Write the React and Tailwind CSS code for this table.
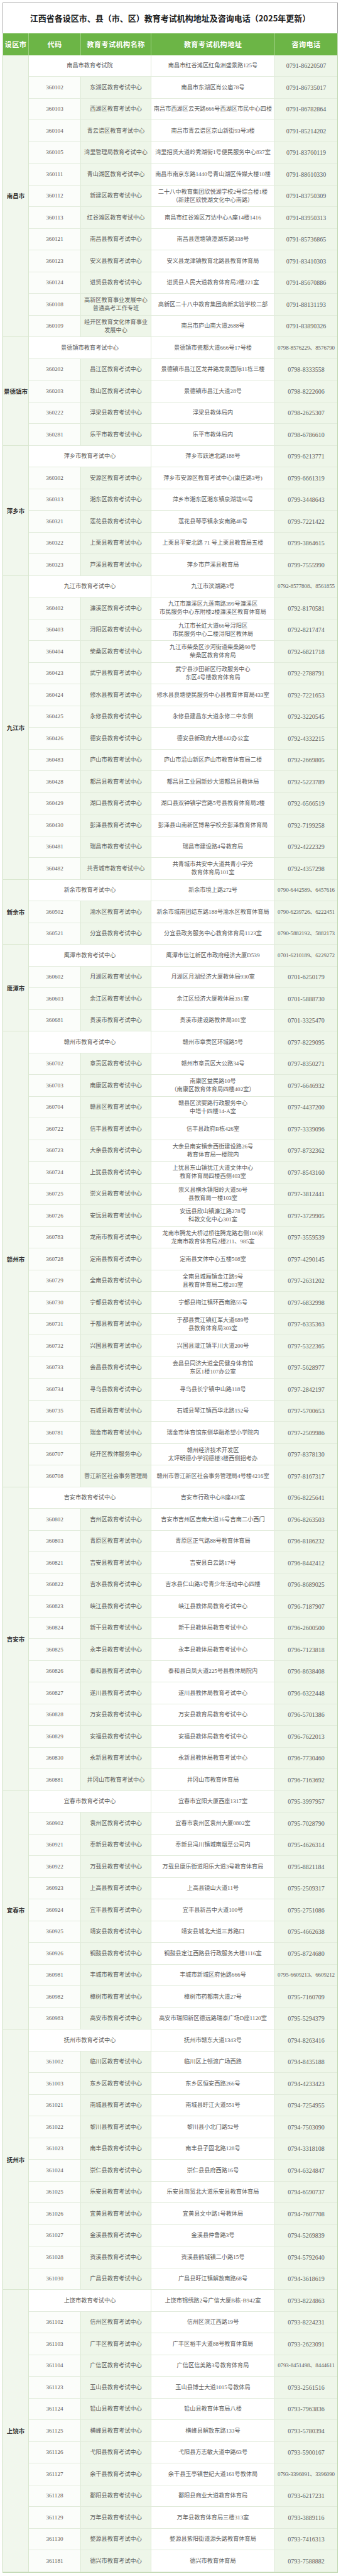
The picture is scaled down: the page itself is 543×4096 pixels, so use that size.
import React from 'react';

// 江西省各设区市、县（市、区）教育考试机构地址及咨询电话
// first row of each city has no code: the city-level center spans 代码 + 名称
const groups = [
  {
    city: '南昌市',
    rows: [
      [null, '南昌市教育考试院', '南昌市红谷滩区红角洲盛景路125号', '0791-86220507'],
      ['360102', '东湖区教育考试中心', '南昌市东湖区肖公庙78号', '0791-86735017'],
      ['360103', '西湖区教育考试中心', '南昌市西湖区云天路666号西湖区市民中心四楼', '0791-86782864'],
      ['360104', '青云谱区教育考试中心', '南昌市青云谱区京山新街93号3楼', '0791-85214202'],
      ['360105', '湾里管理局教育考试中心', '湾里招贤大道岭秀湖街1号便民服务中心837室', '0791-83760119'],
      ['360111', '青山湖区教育考试中心', '南昌市南京东路1440号青山湖区传媒大楼10楼', '0791-88610330'],
      ['360112', '新建区教育考试中心', '二十八中教育集团欣悦湖学校2号综合楼1楼\n（新建区欣悦湖文化中心南路）', '0791-83750309'],
      ['360113', '红谷滩区教育考试中心', '南昌市红谷滩区万达中心A座14楼1416', '0791-83950313'],
      ['360121', '南昌县教育考试中心', '南昌县莲塘镇澄湖东路338号', '0791-85736865'],
      ['360123', '安义县教育考试中心', '安义县龙津镇教育北路县教育体育局', '0791-83410303'],
      ['360124', '进贤县教育考试中心', '进贤县人民大道教育体育局2楼221室', '0791-85670886'],
      ['360108', '高新区教育事业发展中心\n普通高考工作专班', '高新区二十八中教育集团高新实验学校二部', '0791-88131193'],
      ['360109', '经开区教育文化体育事业\n发展中心', '南昌市庐山南大道2688号', '0791-83890326'],
    ],
  },
  {
    city: '景德镇市',
    rows: [
      [null, '景德镇市教育考试中心', '景德镇市瓷都大道666号17号楼', '0798-8576229、8576790'],
      ['360202', '昌江区教育考试中心', '景德镇市昌江区龙井路龙景国际11栋三楼', '0798-8333558'],
      ['360203', '珠山区教育考试中心', '景德镇市昌江大道28号', '0798-8222606'],
      ['360222', '浮梁县教育考试中心', '浮梁县教体局内', '0798-2625307'],
      ['360281', '乐平市教育考试中心', '乐平市教体局内', '0798-6786610'],
    ],
  },
  {
    city: '萍乡市',
    rows: [
      [null, '萍乡市教育考试中心', '萍乡市跃进北路188号', '0799-6213771'],
      ['360302', '安源区教育考试中心', '萍乡市安源区教育考试中心(康庄路3号)', '0799-6661319'],
      ['360313', '湘东区教育考试中心', '萍乡市湘东区湘东镇泉湖垅96号', '0799-3448643'],
      ['360321', '莲花县教育考试中心', '莲花县琴亭镇永安南路48号', '0799-7221422'],
      ['360322', '上栗县教育考试中心', '上栗县平安北路 71 号上栗县教育局五楼', '0799-3864615'],
      ['360323', '芦溪县教育考试中心', '萍乡市芦溪县教育局', '0799-7555990'],
    ],
  },
  {
    city: '九江市',
    rows: [
      [null, '九江市教育考试中心', '九江市滨湖路3号', '0792-8577808、8561855'],
      ['360402', '濂溪区教育考试中心', '九江市濂溪区九莲南路399号濂溪区\n市民服务中心东附楼2楼濂溪区教育体育局', '0792-8170581'],
      ['360403', '浔阳区教育考试中心', '九江市长虹大道66号浔阳区\n市民服务中心二楼浔阳区教体局', '0792-8217474'],
      ['360404', '柴桑区教育考试中心', '九江市柴桑区沙河街道柴桑路90号\n柴桑区教育体育局', '0792-6821718'],
      ['360423', '武宁县教育考试中心', '武宁县沙田新区行政服务中心\n东区4号楼教育体育局', '0792-2788791'],
      ['360424', '修水县教育考试中心', '修水县良塘便民服务中心县教育体育局433室', '0792-7221653'],
      ['360425', '永修县教育考试中心', '永修县建昌东大道永修二中东侧', '0792-3220545'],
      ['360426', '德安县教育考试中心', '德安县新政府大楼442办公室', '0792-4332215'],
      ['360483', '庐山市教育考试中心', '庐山市沿山新区庐山市教育体育局二楼', '0792-2669805'],
      ['360428', '都昌县教育考试中心', '都昌县工业园新妙大道都昌县教体局', '0792-5223789'],
      ['360429', '湖口县教育考试中心', '湖口县双钟镇学宫路5号县教育体育局2楼', '0792-6566519'],
      ['360430', '彭泽县教育考试中心', '彭泽县山南新区博希学校旁彭泽教育体育局', '0792-7199258'],
      ['360481', '瑞昌市教育考试中心', '瑞昌市建设路4号教育局', '0792-4222329'],
      ['360482', '共青城市教育考试中心', '共青城市共安中大道共青小学旁\n教育体育局101室', '0792-4357298'],
    ],
  },
  {
    city: '新余市',
    rows: [
      [null, '新余市教育考试中心', '新余市境上路272号', '0790-6442589、6457616'],
      ['360502', '渝水区教育考试中心', '新余市城南团结东路188号渝水区教育体育局', '0790-6239726、6222451'],
      ['360521', '分宜县教育考试中心', '分宜县政务服务中心教育体育局1123室', '0790-5882192、5882173'],
    ],
  },
  {
    city: '鹰潭市',
    rows: [
      [null, '鹰潭市教育考试中心', '鹰潭市信江新区市政府经济大厦D539', '0701-6210189、6229272'],
      ['360602', '月湖区教育考试中心', '月湖区月湖经济大厦教体局930室', '0701-6250179'],
      ['360603', '余江区教育考试中心', '余江区经济大厦教体局351室', '0701-5888730'],
      ['360681', '贵溪市教育考试中心', '贵溪市建设路教体局301室', '0701-3325470'],
    ],
  },
  {
    city: '赣州市',
    rows: [
      [null, '赣州市教育考试中心', '赣州市章贡区环城路5号', '0797-8229095'],
      ['360702', '章贡区教育考试中心', '赣州市章贡区大公路34号', '0797-8350271'],
      ['360703', '南康区教育考试中心', '南康区益民路10号\n（南康区教育体育局四楼402室）', '0797-6646932'],
      ['360704', '赣县区教育考试中心', '赣县区滨婴路行政服务中心\n中塔十四楼14-A室', '0797-4437200'],
      ['360722', '信丰县教育考试中心', '信丰县政府B栋426室', '0797-3339096'],
      ['360723', '大余县教育考试中心', '大余县南安镇余西街建设路26号\n教育体育局一楼院内', '0797-8732362'],
      ['360724', '上犹县教育考试中心', '上犹县东山镇犹江大道文体中心\n教育体育局四楼西侧403室', '0797-8543160'],
      ['360725', '崇义县教育考试中心', '崇义县横水镇阳岭大道50号\n县教育局一楼103室', '0797-3812441'],
      ['360726', '安远县教育考试中心', '安远县欣山镇濂江路278号\n科教文化中心301室', '0797-3729905'],
      ['360783', '龙南市教育考试中心', '龙南市腾龙大桥过桥往腾龙路右侧100米\n龙南市教育体育局2楼211、985室', '0797-3559539'],
      ['360728', '定南县教育考试中心', '定南县文体中心五楼508室', '0797-4290145'],
      ['360729', '全南县教育考试中心', '全南县城厢镇金江路9号\n县教育体育局二楼203室', '0797-2631202'],
      ['360730', '宁都县教育考试中心', '宁都县梅江镇环西南路55号', '0797-6832998'],
      ['360731', '于都县教育考试中心', '于都县贡江镇红军大道689号\n县教育体育局303室', '0797-6335363'],
      ['360732', '兴国县教育考试中心', '兴国县潋江镇平川大道200号', '0797-5322365'],
      ['360733', '会昌县教育考试中心', '会昌县同济大道全民健身体育馆\n东区1楼107办公室', '0797-5628977'],
      ['360734', '寻乌县教育考试中心', '寻乌县长宁镇中山路118号', '0797-2842197'],
      ['360735', '石城县教育考试中心', '石城县琴江镇西华北路152号', '0797-5700653'],
      ['360781', '瑞金市教育考试中心', '瑞金市体育馆东侧华融希望小学院内', '0797-2509986'],
      ['360707', '经开区教体服务中心', '赣州经济技术开发区\n太坪明德小学润德楼3楼西侧招考办', '0797-8378130'],
      ['360708', '蓉江新区社会事务管理局', '赣州市蓉江新区社会事务管理局4号楼4216室', '0797-8167317'],
    ],
  },
  {
    city: '吉安市',
    rows: [
      [null, '吉安市教育考试中心', '吉安市行政中心B座428室', '0796-8225641'],
      ['360802', '吉州区教育考试中心', '吉安市吉州区吉南大道16号吉南二小西门', '0796-8263503'],
      ['360803', '青原区教育考试中心', '青原区正气路88号教育体育局', '0796-8186232'],
      ['360821', '吉安县教育考试中心', '吉安县白云路17号', '0796-8442412'],
      ['360822', '吉水县教育考试中心', '吉水县仁山路3号青少年活动中心四楼', '0796-8689025'],
      ['360823', '峡江县教育考试中心', '峡江县教体局教育考试中心', '0796-7187907'],
      ['360824', '新干县教育考试中心', '新干县教体局教育考试中心', '0796-2600500'],
      ['360825', '永丰县教育考试中心', '永丰县教体局教育考试中心', '0796-7123818'],
      ['360826', '泰和县教育考试中心', '泰和县白凤大道225号县教体局院内', '0796-8638408'],
      ['360827', '遂川县教育考试中心', '遂川县教体局教育考试中心', '0796-6322448'],
      ['360828', '万安县教育考试中心', '万安县教育局教育考试中心', '0796-5701386'],
      ['360829', '安福县教育考试中心', '安福县教体局教育考试中心', '0796-7622013'],
      ['360830', '永新县教育考试中心', '永新县教体局教育考试中心', '0796-7730460'],
      ['360881', '井冈山市教育考试中心', '井冈山市教育体育局', '0796-7163692'],
    ],
  },
  {
    city: '宜春市',
    rows: [
      [null, '宜春市教育考试中心', '宜春市宜阳大厦西座1317室', '0795-3997957'],
      ['360902', '袁州区教育考试中心', '宜春市袁州区袁州大厦0802室', '0795-7028790'],
      ['360921', '奉新县教育考试中心', '奉新县冯川镇城南烟草公司内', '0795-4626314'],
      ['360922', '万载县教育考试中心', '万载县康乐街道阳乐大道3号教育体育局', '0795-8821184'],
      ['360923', '上高县教育考试中心', '上高县镜山大道11号', '0795-2509317'],
      ['360924', '宜丰县教育考试中心', '宜丰县新昌中大道100号', '0795-2751086'],
      ['360925', '靖安县教育考试中心', '靖安县城北大道三苏路口', '0795-4662638'],
      ['360926', '铜鼓县教育考试中心', '铜鼓县定江西路县行政服务大楼1116室', '0795-8724680'],
      ['360981', '丰城市教育考试中心', '丰城市新城区府佑路666号', '0795-6609213、6609212'],
      ['360982', '樟树市教育考试中心', '樟树市药都南大道27号', '0795-7160709'],
      ['360983', '高安市教育考试中心', '高安市瑞阳新区德远路瑞泰广场D座1120室', '0795-5294379'],
    ],
  },
  {
    city: '抚州市',
    rows: [
      [null, '抚州市教育考试中心', '抚州市赣东大道1343号', '0794-8263416'],
      ['361002', '临川区教育考试中心', '临川区上顿渡广场西路', '0794-8435188'],
      ['361003', '东乡区教育考试中心', '东乡区恒安西路266号', '0794-4233423'],
      ['361021', '南城县教育考试中心', '南城县盱江大道551号', '0794-7254955'],
      ['361022', '黎川县教育考试中心', '黎川县小北门路52号', '0794-7503090'],
      ['361023', '南丰县教育考试中心', '南丰县子固北路128号', '0794-3318108'],
      ['361024', '崇仁县教育考试中心', '崇仁县县府西路16号', '0794-6324847'],
      ['361025', '乐安县教育考试中心', '乐安县商贸北大道乐安县教育体育局', '0794-6590737'],
      ['361026', '宜黄县教育考试中心', '宜黄县文中路1号教体局', '0794-7607708'],
      ['361027', '金溪县教育考试中心', '金溪县仲鲁路3号', '0794-5269839'],
      ['361028', '资溪县教育考试中心', '资溪县鹤城镇二小路15号', '0794-5792640'],
      ['361030', '广昌县教育考试中心', '广昌县旴江镇解放南路68号', '0794-3618619'],
    ],
  },
  {
    city: '上饶市',
    rows: [
      [null, '上饶市教育考试中心', '上饶市锦绣路2号广信大厦B栋-B942室', '0793-8224863'],
      ['361102', '信州区教育考试中心', '信州区滨江西路19号', '0793-8224231'],
      ['361103', '广丰区教育考试中心', '广丰区裕丰大道88号教育体育局', '0793-2623091'],
      ['361104', '广信区教育考试中心', '广信区信美路3号教育体育局', '0793-8451498、8444611'],
      ['361123', '玉山县教育考试中心', '玉山县博士大道1015号教体局', '0793-2561516'],
      ['361124', '铅山县教育考试中心', '铅山县教育体育局八楼', '0793-7963836'],
      ['361125', '横峰县教育考试中心', '横峰县解放东路133号', '0793-5780394'],
      ['361126', '弋阳县教育考试中心', '弋阳县方志敏大道中路63号', '0793-5900167'],
      ['361127', '余干县教育考试中心', '余干县玉亭镇世纪大道161号教体局', '0793-3396091、3396090'],
      ['361128', '鄱阳县教育考试中心', '鄱阳县商业大道教育体育局', '0793-6217231'],
      ['361129', '万年县教育考试中心', '万年县教育体育局三楼313室', '0793-3889116'],
      ['361130', '婺源县教育考试中心', '婺源县紫阳街道源头路教育体育局', '0793-7416313'],
      ['361181', '德兴市教育考试中心', '德兴市教育体育局', '0793-7588882'],
    ],
  },
];

const cell = 'flex items-center justify-center text-center whitespace-pre-line leading-[13px]';

const Row = ({ row }) => {
  const [code, name, addr, phone] = row;
  const double = phone.includes('、');
  const phoneSize = double ? 'text-[9px] tracking-[-0.1px]' : 'text-[10px]';

  return (
    <div className="grid h-[34.5px] grid-cols-[83px_112px_197px_1fr] border-b border-[#e1ebdb]">
      {code === null ? (
        <div className={`${cell} col-span-2 bg-white border-r border-[#dbe8d2]`}>{name}</div>
      ) : (
        <>
          <div className={`${cell} bg-[#fbfdfa] border-r border-[#dbe8d2] text-[9.2px]`}>{code}</div>
          <div className={`${cell} bg-[#eef6e9] border-r border-[#dbe8d2]`}>{name}</div>
        </>
      )}
      <div className={`${cell} bg-white border-r border-[#dbe8d2]`}>{addr}</div>
      <div className={`${cell} bg-[#eef6e9] whitespace-nowrap ${phoneSize}`}>{phone}</div>
    </div>
  );
};

export default function App() {
  return (
    <div className="w-[543px] bg-white pt-[4px] pl-[4px] pr-[5px]">
      {/* Title */}
      <div className="flex h-[48.5px] items-center justify-center border-x border-t border-[#a9a9a9] bg-white">
        <h1 className="font-['Noto_Sans_CJK_SC','Noto_Sans',sans-serif] text-[13px] font-bold text-[#1d1d1d]">
          江西省各设区市、县（市、区）教育考试机构地址及咨询电话（2025年更新）
        </h1>
      </div>

      <div className="border-x-[1.5px] border-b-[1.5px] border-[#c3dab5]">
        {/* Header */}
        <div className="grid h-[35.3px] grid-cols-[41px_83px_112px_197px_1fr] bg-[#6cb546] font-['Noto_Sans_CJK_SC','Noto_Sans',sans-serif] text-[11.2px] font-bold tracking-[0.4px] text-white">
          <div className="flex items-center justify-center border-r border-[#9ccf80]">设区市</div>
          <div className="flex items-center justify-center border-r border-[#9ccf80]">代码</div>
          <div className="flex items-center justify-center border-r border-[#9ccf80]">教育考试机构名称</div>
          <div className="flex items-center justify-center border-r border-[#9ccf80]">教育考试机构地址</div>
          <div className="flex items-center justify-center">咨询电话</div>
        </div>

        {/* Body */}
        <div className="font-['Liberation_Serif','Noto_Sans_CJK_SC',serif] text-[9.2px] text-[#5c5c5c]">
          {groups.map((g) => (
            <div key={g.city} className="flex">
              <div className="flex w-[41px] shrink-0 items-center justify-center border-r border-b border-[#d9e7cf] bg-[#f1f7ed] font-['Noto_Sans_CJK_SC','Noto_Sans',sans-serif] text-[9.5px] font-bold text-[#333]">
                {g.city}
              </div>
              <div className="flex-1">
                {g.rows.map((r, i) => (
                  <Row key={i} row={r} />
                ))}
              </div>
            </div>
          ))}
        </div>
      </div>
    </div>
  );
}
